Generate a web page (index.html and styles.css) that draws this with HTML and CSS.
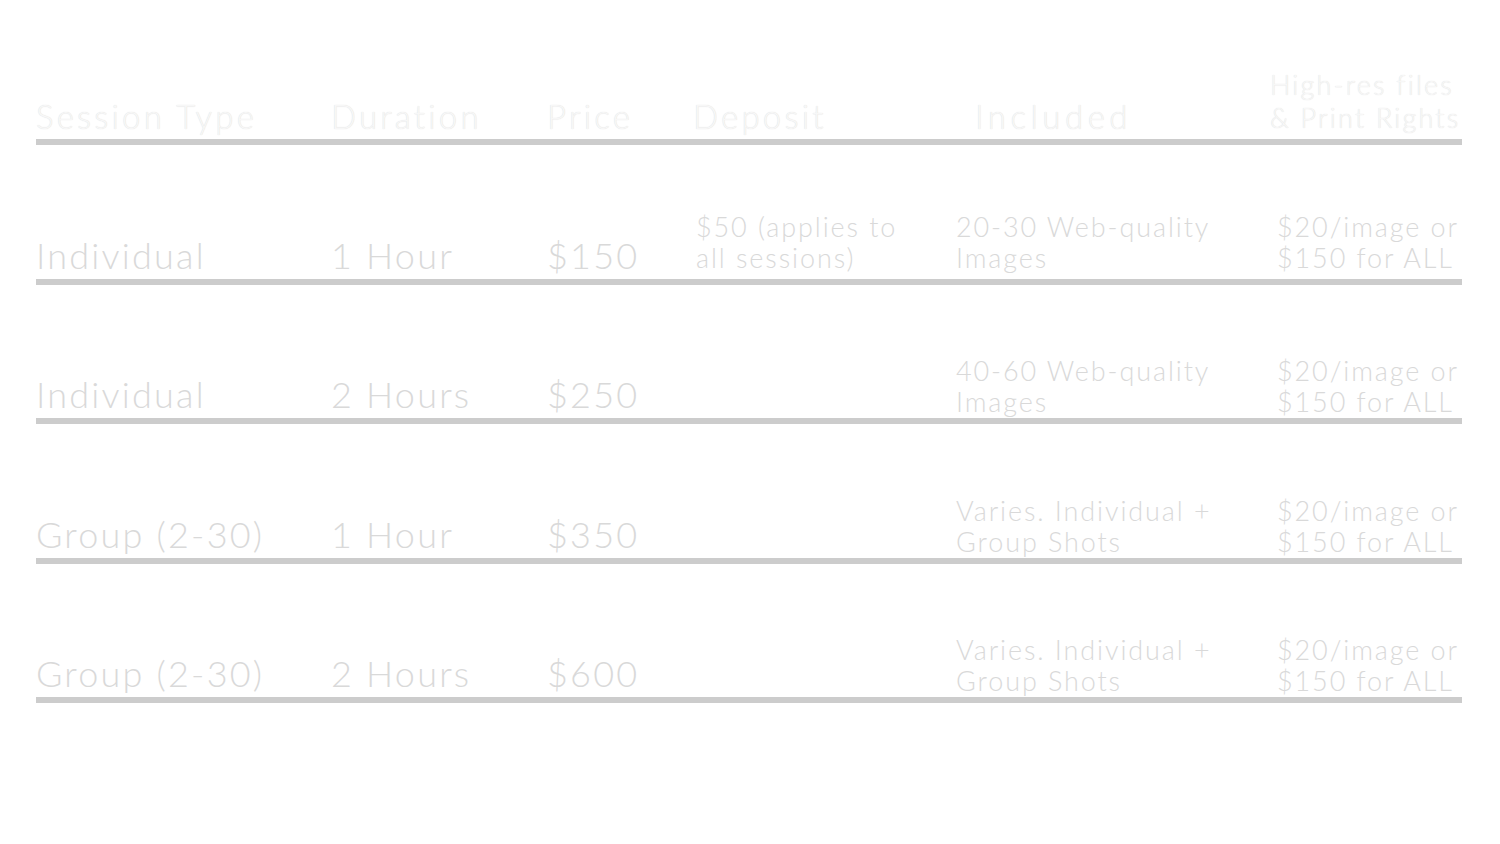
FILE: index.html
```html
<!DOCTYPE html>
<html>
<head>
<meta charset="utf-8">
<link rel="stylesheet" href="styles.css">
</head>
<body>
<div class="table">
  <div class="row head">
    <div class="cell c1">Session Type</div>
    <div class="cell c2">Duration</div>
    <div class="cell c3">Price</div>
    <div class="cell c4">Deposit</div>
    <div class="cell c5">Included</div>
    <div class="cell c6 small">High-res files<br>&amp; Print Rights</div>
  </div>
  <div class="row first">
    <div class="cell">Individual</div>
    <div class="cell">1 Hour</div>
    <div class="cell">$150</div>
    <div class="cell small dep">$50 (applies to<br>all sessions)</div>
    <div class="cell small">20-30 Web-quality<br>Images</div>
    <div class="cell small">$20/image or<br>$150 for ALL</div>
  </div>
  <div class="row">
    <div class="cell">Individual</div>
    <div class="cell">2 Hours</div>
    <div class="cell">$250</div>
    <div class="cell small"></div>
    <div class="cell small">40-60 Web-quality<br>Images</div>
    <div class="cell small">$20/image or<br>$150 for ALL</div>
  </div>
  <div class="row">
    <div class="cell">Group (2-30)</div>
    <div class="cell">1 Hour</div>
    <div class="cell">$350</div>
    <div class="cell small"></div>
    <div class="cell small">Varies. Individual +<br>Group Shots</div>
    <div class="cell small">$20/image or<br>$150 for ALL</div>
  </div>
  <div class="row">
    <div class="cell">Group (2-30)</div>
    <div class="cell">2 Hours</div>
    <div class="cell">$600</div>
    <div class="cell small"></div>
    <div class="cell small">Varies. Individual +<br>Group Shots</div>
    <div class="cell small">$20/image or<br>$150 for ALL</div>
  </div>
</div>
</body>
</html>
```
FILE: styles.css
```css
html, body {
  margin: 0;
  padding: 0;
  background: #ffffff;
}
body {
  font-family: "Lato", "Liberation Sans", sans-serif;
  font-weight: 300;
  color: #d9d9d9;
}
.table {
  width: 1426px;
  margin-left: 36px;
}
.row {
  display: grid;
  grid-template-columns: 295px 216px 146px 263px 321px 185px;
  align-items: end;
  height: 125.5px;
  border-bottom: 6px solid #cccccc;
  padding-bottom: 8px;
  box-sizing: content-box;
}
.head {
  height: 134px;
  padding-bottom: 5px;
  color: #f7f7f7;
  text-shadow: 0 0 1px #d8d8d8;
}
.cell {
  font-size: 36px;
  line-height: 38px;
  letter-spacing: 2.2px;
  white-space: nowrap;
  margin-bottom: -3px;
}
.small {
  font-size: 27px;
  line-height: 31px;
  letter-spacing: 1.9px;
  margin-bottom: -7px;
}
.first .small {
  margin-bottom: -2px;
}
.head .cell {
  font-size: 33px;
  line-height: 36px;
  letter-spacing: 3.2px;
  margin-bottom: 0;
}
.head .small {
  font-size: 27px;
  line-height: 33px;
  letter-spacing: 2.2px;
  margin-bottom: 0;
}
.head .c5 { padding-left: 19px; letter-spacing: 4.5px; }
.head .c6 { margin-left: -7px; }
.first .dep { margin-left: 3px; margin-bottom: -2px; }
```
